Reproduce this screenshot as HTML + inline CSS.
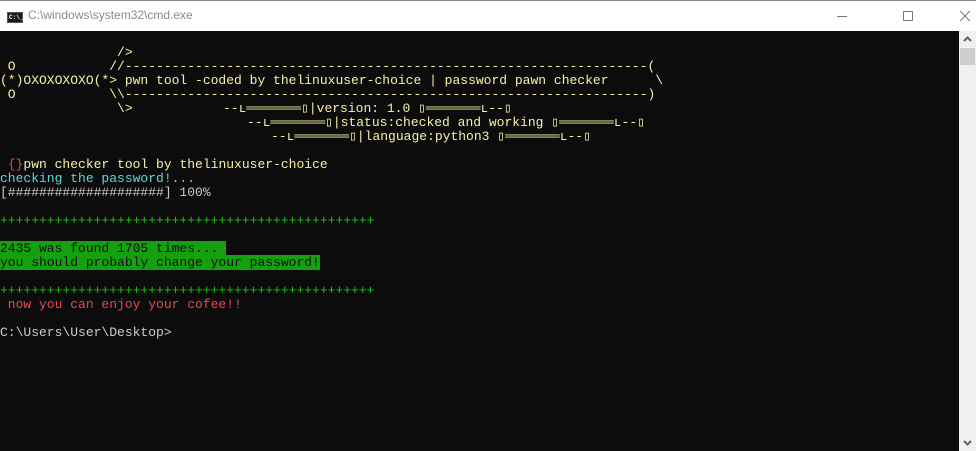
<!DOCTYPE html>
<html><head><meta charset="utf-8"><style>
html,body{margin:0;padding:0;width:976px;height:451px;overflow:hidden;background:#0c0c0c;}
#title{position:absolute;left:0;top:0;width:976px;height:31px;background:#fff;border-top:1px solid #8a8a8a;box-sizing:border-box;font-family:"Liberation Sans",sans-serif;}
#title .t{position:absolute;left:28px;top:7px;font-size:12px;color:#8a8a8a;}
#ico{position:absolute;left:7px;top:11px;width:16px;height:11px;background:#1a1a1a;border:1px solid #555;box-sizing:border-box;color:#fff;font:bold 6px "Liberation Mono",monospace;line-height:9px;padding-left:1px}
.ctl{position:absolute;top:0;}
#sb{position:absolute;left:959px;top:31px;width:17px;height:420px;background:#f0f0f0;}
#thumb{position:absolute;left:1px;top:17px;width:15px;height:17px;background:#cdcdcd;}
.l{position:absolute;white-space:pre;font-family:"Liberation Mono","DejaVu Sans Mono",monospace;font-size:13px;line-height:14px;height:14px;color:#cccccc;margin-top:3px}
.y{color:#f9f1a5}.c{color:#61d6d6}.r{color:#e74856}.g{color:#16c60c}
.hb{background:#13a10e;color:#0c0c0c}
</style></head><body>
<div id="title"><div id="ico">C:\_</div><div class="t">C:\windows\system32\cmd.exe</div>
<svg class="ctl" style="left:830px" width="146" height="31">
<line x1="7" y1="15.5" x2="17" y2="15.5" stroke="#777" stroke-width="1"/>
<rect x="73.5" y="10.5" width="9" height="9" fill="none" stroke="#777"/>
<line x1="130" y1="10" x2="140" y2="20" stroke="#777"/><line x1="140" y1="10" x2="130" y2="20" stroke="#777"/>
</svg></div>
<div id="sb"><svg width="17" height="17" style="position:absolute;top:0;left:0"><polyline points="5,10 8.5,6.5 12,10" fill="none" stroke="#606060" stroke-width="2"/></svg><div id="thumb"></div>
<svg width="17" height="17" style="position:absolute;top:403px;left:0"><polyline points="5,7 8.5,10.5 12,7" fill="none" stroke="#606060" stroke-width="2"/></svg></div>

<div class="l y" style="left:0;top:43px">               /&gt;</div>
<div class="l y" style="left:0;top:57px"> O            //-------------------------------------------------------------------(</div>
<div class="l y" style="left:0;top:71px">(*)OXOXOXOXO(*&gt; pwn tool -coded by thelinuxuser-choice | password pawn checker      \</div>
<div class="l y" style="left:0;top:85px"> O            \\-------------------------------------------------------------------)</div>
<div class="l y" style="left:0;top:99px">               \&gt;</div>
<div class="l y" style="left:223px;top:99px">--ʟ═══════▯|version: 1.0 ▯═══════ʟ--▯</div>
<div class="l y" style="left:247px;top:113px">--ʟ═══════▯|status:checked and working ▯═══════ʟ--▯</div>
<div class="l y" style="left:271px;top:127px">--ʟ═══════▯|language:python3 ▯═══════ʟ--▯</div>

<div class="l y" style="left:0;top:155px"> <span class="r">{}</span>pwn checker tool by thelinuxuser-choice</div>
<div class="l c" style="left:0;top:169px">checking the password!...</div>
<div class="l" style="left:0;top:183px">[####################] 100%</div>
<div class="l g" style="left:0;top:211px">++++++++++++++++++++++++++++++++++++++++++++++++</div>
<div class="l" style="left:0;top:239px"><span class="hb">2435 was found 1705 times... </span></div>
<div class="l" style="left:0;top:253px"><span class="hb">you should probably change your password!</span></div>
<div class="l g" style="left:0;top:281px">++++++++++++++++++++++++++++++++++++++++++++++++</div>
<div class="l r" style="left:0;top:295px"> now you can enjoy your cofee!!</div>
<div class="l" style="left:0;top:323px">C:\Users\User\Desktop&gt;</div>
</body></html>
